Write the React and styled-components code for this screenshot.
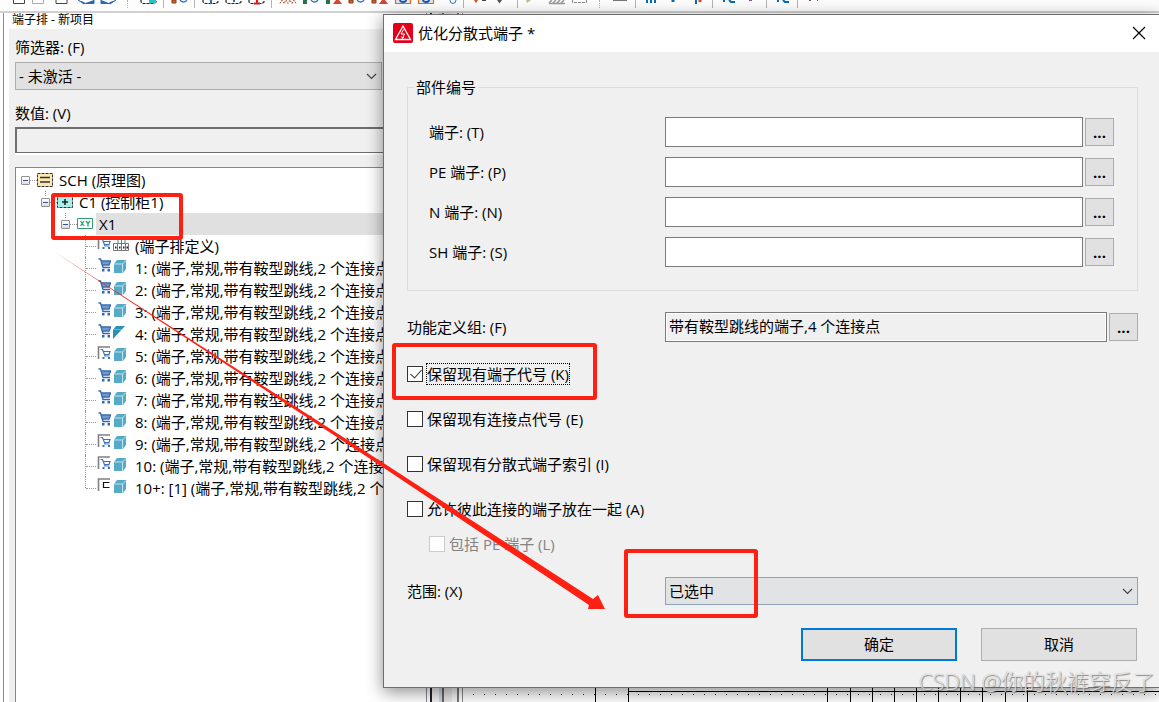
import React, { useState } from 'react';
import styled, { createGlobalStyle, css } from 'styled-components';

// Main color variables
const faceColor = '#f0f0f0';
const controlColor = '#e1e1e1';
const borderColor = '#adadad';
const fieldBorder = '#7a7a7a';
const accentColor = '#0078d7';
const markColor = '#ff2014';
const uiFont = '"Open Sans", "Noto Sans CJK SC", sans-serif';

const GlobalStyle = createGlobalStyle`
  * {
    box-sizing: border-box;
  }

  body {
    margin: 0;
    background: #fff;
    color: #000;
    font-family: ${uiFont};
    font-size: 15px;
    line-height: 22px;
    overflow: hidden;
  }

  button, input, select {
    font: inherit;
    color: inherit;
    margin: 0;
  }
`;

const Page = styled.div`
  position: relative;
  display: flex;
  flex-direction: column;
  height: 100vh;
  overflow: hidden;
`;

/* Toolbar */
const Toolbar = styled.header`
  display: flex;
  flex: none;
  height: 13px;
  padding-left: 4px;
  background: #fdfdfd;
  border-bottom: 2px solid #d0d0d0;
`;

const ToolButton = styled.button`
  flex: none;
  width: 23px;
  height: 8px;
  padding: 0;
  border: 0;
  background: transparent;

  svg {
    display: block;
  }
`;

const ToolSeparator = styled.span`
  flex: none;
  width: ${({ $wide }) => ($wide ? '18px' : '8px')};
  height: 8px;

  &::before {
    content: '';
    display: block;
    width: 1px;
    height: 8px;
    margin: 0 auto;
    border-left: 1px ${({ $wide }) => ($wide ? 'dotted' : 'solid')} #b4b4b4;
  }
`;

/* Docked navigator */
const Workspace = styled.main`
  display: flex;
  flex: 1;
  min-height: 0;
`;

const Dock = styled.section`
  display: flex;
  flex-direction: column;
  flex: none;
  width: 424px;
  margin-left: 3px;
  border-left: 1px solid #8c8c8c;
  border-right: 1px solid #828790;
`;

const DockTitle = styled.h2`
  margin: 0;
  padding-left: 8px;
  height: 16px;
  font-size: 12px;
  font-weight: 400;
  line-height: 14px;
`;

const DockBody = styled.div`
  display: flex;
  flex-direction: column;
  flex: 1;
  min-height: 0;
  margin-left: 5px;
  padding-left: 6px;
  background: ${faceColor};
`;

const DockField = styled.div`
  display: flex;
  flex-direction: column;
  gap: ${({ $gap }) => $gap}px;
  margin-top: ${({ $top }) => $top}px;
`;

const SelectBox = styled.div`
  position: relative;
  flex: ${({ $grow }) => ($grow ? 1 : 'none')};
  width: ${({ $grow }) => ($grow ? 'auto' : '367px')};
  height: 28px;

  select {
    appearance: none;
    display: block;
    width: 100%;
    height: 28px;
    padding: 0 24px 0 3px;
    border: 1px solid ${({ $grow }) => ($grow ? '#8ea3b7' : borderColor)};
    border-radius: 0;
    background: ${({ $grow }) => ($grow ? '#e1e3e5' : controlColor)};
  }

  svg {
    position: absolute;
    top: 11px;
    right: 5px;
    pointer-events: none;
  }
`;

const ValueInput = styled.input`
  flex: none;
  height: 26px;
  padding: 0 4px;
  border: 0;
  border-top: 2px solid #6e6e6e;
  border-left: 2px solid #6e6e6e;
  border-bottom: 1px solid #6e6e6e;
  border-radius: 0;
  background: ${faceColor};
  box-shadow: 0 2px 0 #fff;
`;

const Tree = styled.div`
  flex: 1;
  min-height: 0;
  margin-top: 14px;
  padding: 1px 0 0 5px;
  overflow: hidden;
  background: #fff;
  border-top: 1px solid #828790;
  border-left: 1px solid #828790;
`;

const TreeList = styled.ul`
  list-style: none;
  margin: 0;
  padding: 0 0 0 ${({ $indent = 0 }) => $indent}px;
`;

const TreeRow = styled.div`
  display: flex;
  align-items: center;
  height: 22px;
  white-space: nowrap;

  /* dotted stem that joins a nested row to its parent icon */
  ${({ $nested }) => $nested && css`
    background: repeating-linear-gradient(#999 0 1px, transparent 1px 2px) 4px 0 / 1px 6px no-repeat;
  `}

  svg {
    flex: none;
  }
`;

const Expander = styled.button`
  display: flex;
  flex: none;
  width: 9px;
  height: 9px;
  padding: 0;
  border: 1px solid #919191;
  border-radius: 1px;
  background: linear-gradient(#fff, #dcdcdc);

  &::before {
    content: '';
    width: 5px;
    height: 1px;
    margin: 3px 1px;
    background: #3a4f9c;
  }
`;

const Dash = styled.span`
  flex: none;
  width: 7px;
  border-top: 1px dotted #999;
`;

const Elbow = styled.span`
  flex: none;
  align-self: flex-start;
  width: 11px;
  height: ${({ $last }) => ($last ? '11px' : '22px')};
  border-left: 1px dotted #999;

  &::before {
    content: '';
    display: block;
    height: 11px;
    border-bottom: 1px dotted #999;
  }
`;

const NodeText = styled.span`
  flex: 1;
  padding-left: ${({ $pad = 3 }) => $pad}px;
  margin-left: 3px;
  background: ${({ $selected }) => ($selected ? '#e0e0e0' : 'transparent')};
`;

const LeafIcons = styled.span`
  display: flex;
  flex: none;
  gap: 1px;
  align-self: flex-start;
  width: 35px;
  padding: 1px 0 0 1px;
`;

/* Schematic page behind the dialog */
const Splitter = styled.div`
  flex: none;
  width: 36px;
  background: linear-gradient(
    90deg,
    #fff 0 3px, #222 3px 5px, #f0f0f0 5px 12px, #ccd2e8 12px 15px, #666 15px 17px,
    #e4e4e4 17px 25px, #f4f4f4 25px 30px, #777 30px 32px, #fff 32px 35px, #888 35px 36px
  );
`;

const Sheet = styled.div`
  display: flex;
  align-items: flex-end;
  flex: 1;
  min-width: 0;
  overflow: hidden;

  svg {
    flex: none;
  }
`;

/* Dialog */
const Dialog = styled.section`
  position: absolute;
  top: 14px;
  left: 383px;
  right: 0;
  background: ${faceColor};
  border: 1px solid #6e6e6e;
  border-right: 0;
  box-shadow: 0 4px 16px rgba(0, 0, 0, 0.45);
`;

const DialogHeader = styled.header`
  display: flex;
  align-items: center;
  height: 37px;
  padding: 0 13px 1px 9px;
  background: #fff;
`;

const DialogTitle = styled.h1`
  flex: 1;
  margin: 0 0 0 5px;
  font-size: 15px;
  font-weight: 400;
`;

const CloseButton = styled.button`
  display: flex;
  padding: 0;
  border: 0;
  background: transparent;
`;

const DialogForm = styled.form`
  padding: 24px 21px 26px 23px;
`;

const PartGroup = styled.fieldset`
  display: flex;
  flex-direction: column;
  gap: 10px;
  margin: 0;
  padding: 19px 23px 23px 21px;
  border: 1px solid #dcdcdc;

  legend {
    margin-left: -15px;
    padding: 0 2px;
  }
`;

const FieldRow = styled.div`
  display: flex;
  align-items: center;
  margin-top: ${({ $top = 0 }) => $top}px;
`;

const FieldLabel = styled.label`
  flex: none;
  width: ${({ $wide }) => ($wide ? '258px' : '236px')};
`;

const TextInput = styled.input`
  flex: 1;
  min-width: 0;
  height: 30px;
  padding: 0 3px 4px;
  border: 1px solid ${fieldBorder};
  border-radius: 0;
  background: #fff;

  ${({ readOnly }) => readOnly && css`
    background: ${faceColor};
    box-shadow: inset 0 0 0 1px #fff;
  `}
`;

const BrowseButton = styled.button`
  flex: none;
  width: 29px;
  height: 28px;
  margin-left: 2px;
  padding: 0;
  border: 1px solid ${borderColor};
  background: ${controlColor};
  font-weight: 700;
`;

const CheckList = styled.div`
  display: flex;
  flex-direction: column;
  gap: 23px;
  margin-top: 21px;
`;

const CheckLabel = styled.label`
  display: flex;
  align-items: center;
  width: fit-content;
  height: 22px;
  margin: ${({ $sub }) => ($sub ? '13px 0 0 22px' : '0')};
  color: ${({ $sub }) => ($sub ? '#838383' : '#000')};

  span {
    padding: 0 1px;
    margin-left: 3px;
    outline: ${({ $focused }) => ($focused ? '1px dotted #000' : 'none')};
    outline-offset: -1px;
  }
`;

const CheckBox = styled.input`
  appearance: none;
  flex: none;
  width: 16px;
  height: 16px;
  border: 1px solid #333;
  background: #fff;

  &:disabled {
    border-color: #ccc;
  }

  &:checked::after {
    content: '';
    display: block;
    width: 5px;
    height: 10px;
    margin: 0 0 0 5px;
    border: solid #333;
    border-width: 0 1px 1px 0;
    transform: rotate(42deg);
  }
`;

const DialogActions = styled.div`
  display: flex;
  justify-content: flex-end;
  gap: 24px;
  margin-top: 23px;
  padding-right: 1px;
`;

const ActionButton = styled.button`
  width: 156px;
  height: 33px;
  padding: 0 0 2px;
  border: ${({ $primary }) => ($primary ? `2px solid ${accentColor}` : `1px solid ${borderColor}`)};
  background: ${controlColor};
`;

/* Red marks drawn over the screen */
const Marks = styled.svg`
  position: absolute;
  top: 0;
  left: 0;
  pointer-events: none;
`;

const Watermark = styled.div`
  position: absolute;
  right: 4px;
  bottom: 5px;
  color: rgba(236, 236, 236, 0.85);
  font-size: 22px;
  font-weight: 300;
  line-height: 32px;
  text-shadow: 1px 1px 1px rgba(90, 90, 90, 0.7), 0 0 1px rgba(120, 120, 120, 0.5);
  white-space: nowrap;
`;

const page = <path d="M6 0V3.5H17V0" fill="none" stroke="#444" />;
const dashed = (
  <path d="M4 0V2L6 3.5H17L19 2V0" fill="none" stroke="#222" strokeWidth="1.2" strokeDasharray="3 1" />
);
const circle = <path d="M12 0a4 4 0 0 0 7 0" fill="none" stroke="#2f74c0" strokeWidth="1.4" />;
const orange = <path d="M4 0H8V3H4Z" fill="#d0672c" stroke="#8a3b12" />;
const green = <path d="M4 0H8V4H4Z" fill="#28734a" />;
const red = <path d="M11 4L14 0H17L20 4Z" fill="#cf4633" />;
const framed = (
  <g fill="none" strokeWidth="1.2">
    <path d="M4.5 0V3.5H19.5V0" fill="#e4e4e4" stroke="#e86a1b" />
    <path d="M9 0a3 2 0 0 0 6 0" stroke="#1556b5" strokeWidth="1.8" />
  </g>
);

// null = separator, 'wide' = toolbar break
const toolIcons = [
  ['新建', <path d="M9.5 0V3.5H20.5V0" fill="none" stroke="#444" />],
  ['打开', <path d="M5.5 0V3.5H16.5V0" fill="none" stroke="#aaa" />],
  ['页', page],
  ['后退', <path d="M5 0L11 4V2M11 3.5H21V0" fill="#2c67b2" stroke="#2c67b2" />],
  ['前进', <path d="M20 0L14 4V2M14 3.5H5V0" fill="#2c67b2" stroke="#2c67b2" />],
  'wide',
  ['设备', <g>{dashed}<path d="M12 0H19V3H12Z" fill="#21c5c9" /></g>],
  null,
  ['查找', <g>{orange}{circle}</g>],
  null,
  ['端子', <g>{dashed}<path d="M12 0V4" stroke="#2470b8" strokeWidth="2" /></g>],
  ['插头', <g>{dashed}<path d="M12 0V2" stroke="#2470b8" strokeWidth="2" /></g>],
  ['电缆', <g>{dashed}<path d="M12 0V3M9 3.5H15" stroke="#e31a1a" strokeWidth="2" /></g>],
  null,
  ['编号', <path d="M4 3.5L6 0L8 3.5L10 0L12 3.5L14 0L16 3.5L18 0L20 3.5" fill="none" stroke="#b3552c" strokeDasharray="2 1" />],
  ['连接', <g>{green}{circle}</g>],
  ['断开', <g>{green}{red}</g>],
  ['更新', <g>{orange}{circle}</g>],
  ['删除', <g>{orange}{red}</g>],
  ['视图', framed],
  ['布局', framed],
  ['放大', <path d="M13 0a3 3.5 0 0 0 6 0" fill="none" stroke="#2f74c0" />],
  null,
  ['同步', <g><path d="M6 0H10L8 3Z" fill="#d0501c" /><path d="M14 0H18V1H14Z" fill="#444" /></g>],
  ['筛选', <path d="M6 0H11L8.5 3.5Z" fill="#555" />],
  null,
  ['颜色', <path d="M4 0H9L5 3Z" fill="#b7bd8c" />],
  ['填充', <path d="M4 3L7 0M8 3L11 0M12 3L15 0M16 3L19 0M4 3.5H20" stroke="#999" strokeWidth="1.5" />],
  ['区域', <path d="M4.5 0V2.5H18.5V0" fill="none" stroke="#888" strokeDasharray="3 1" />],
  'wide',
  ['线', <path d="M4 0.5H18" stroke="#777" />],
  null,
  ['列', <path d="M7 0V3M11 0V3M15 0V3" stroke="#086bb0" strokeWidth="2" />],
  ['点', <path d="M10 0V2" stroke="#086bb0" strokeWidth="3" />],
  ['分支', <g strokeWidth="2"><path d="M10 0V4" stroke="#086bb0" /><path d="M14 0V2" stroke="#e53b3b" strokeWidth="3" /></g>],
  null,
  ['角', <path d="M7 0V2M12 0L14 2H18" fill="none" stroke="#086bb0" strokeWidth="2" />],
  ['节点', <path d="M9 0H12V1H9Z" fill="#8a51a5" />],
  null,
  ['转角', <path d="M7 0V2M12 0L14 2H18" fill="none" stroke="#086bb0" strokeWidth="2" />],
  null,
  ['文本', <path d="M7 0H9V1H7ZM15 0H16V1H15Z" fill="#864f68" />],
];

const partFields = [
  ['terminal', '端子: (T)'],
  ['pe', 'PE 端子: (P)'],
  ['n', 'N 端子: (N)'],
  ['sh', 'SH 端子: (S)'],
];

const leaves = [
  { text: '(端子排定义)', cart: 'framed', shape: 'strip' },
  { text: '1: (端子,常规,带有鞍型跳线,2 个连接点', cart: 'full' },
  { text: '2: (端子,常规,带有鞍型跳线,2 个连接点', cart: 'full' },
  { text: '3: (端子,常规,带有鞍型跳线,2 个连接点', cart: 'full' },
  { text: '4: (端子,常规,带有鞍型跳线,2 个连接点', cart: 'full', shape: 'half' },
  { text: '5: (端子,常规,带有鞍型跳线,2 个连接点', cart: 'framed' },
  { text: '6: (端子,常规,带有鞍型跳线,2 个连接点', cart: 'full' },
  { text: '7: (端子,常规,带有鞍型跳线,2 个连接点', cart: 'full' },
  { text: '8: (端子,常规,带有鞍型跳线,2 个连接点', cart: 'full' },
  { text: '9: (端子,常规,带有鞍型跳线,2 个连接点', cart: 'framed' },
  { text: '10: (端子,常规,带有鞍型跳线,2 个连接', cart: 'framed' },
  { text: '10+: [1] (端子,常规,带有鞍型跳线,2 个', cart: 'none' },
];

function Chevron() {
  return (
    <svg width="11" height="7" viewBox="0 0 11 7" fill="none" stroke="#444" strokeWidth="1.2">
      <path d="M1 1L5.5 5.5L10 1" />
    </svg>
  );
}

function CartIcon({ type }) {
  return (
    <svg width="14" height="16" viewBox="0 0 14 16" fill="none">
      {type !== 'full' && <path d="M1.500 13V1H13" stroke="#808080" strokeWidth="1.600" />}
      {type === 'full' && (
        <g>
          <path d="M4 3H13L11.500 7H5Z" fill="#8fb0dc" />
          <path d="M1.500 1H3.500L6 9.500H13M4 3H13.500L12 7H5.500" stroke="#3569ad" strokeWidth="1.400" />
          <path d="M4.500 5H12.500" stroke="#5583bf" />
          <path d="M5 11H7.500V13.500H5ZM10.500 11H13V13.500H10.500Z" fill="#3569ad" />
        </g>
      )}
      {type === 'framed' && (
        <g stroke="#3b73b8">
          <path d="M3.500 3.500H5.500L8 10H12.500M6 5.500H13L12 8.500H7.500" strokeWidth="1.200" />
          <path d="M5.500 12H7.500M11 12H13" strokeWidth="1.800" />
        </g>
      )}
      {type === 'none' && <path d="M12.500 4.500H6.500V9.500H12.500" stroke="#111" strokeWidth="1.200" />}
    </svg>
  );
}

function PartIcon({ shape }) {
  if (shape === 'strip') {
    return (
      <svg width="18" height="16" viewBox="0 0 18 16" fill="none">
        <path d="M6 8V3.500H13V8M9.500 3V8" stroke="#2f9d70" />
        <path d="M1.500 7.500H16.500V14.500H1.500ZM5.500 7V14M9.500 7V14M13.500 7V14" stroke="#777" />
        <path d="M3 11.500H4.500M7 11.500H8.500M11 11.500H12.500M14.500 11.500H16" stroke="#222" strokeWidth="2" />
      </svg>
    );
  }
  if (shape === 'half') {
    return (
      <svg width="16" height="16" viewBox="0 0 16 16">
        <path d="M1 6L4 2H13L1 15Z" fill="#2c8fb4" />
        <path d="M1 5.500H10" fill="none" stroke="#65b7d0" />
      </svg>
    );
  }
  return (
    <svg width="16" height="16" viewBox="0 0 16 16">
      <path d="M2 6L5 2H14V11L11 15H2Z" fill="#55aac8" />
      <path d="M2 6H10.500V15M10.500 6L14 2.500" fill="none" stroke="#bfe4ee" />
    </svg>
  );
}

function Navigator() {
  return (
    <Dock>
      <DockTitle>端子排 - 新项目</DockTitle>
      <DockBody>
        <DockField $top={7} $gap={4}>
          <label htmlFor="filter">筛选器: (F)</label>
          <SelectBox>
            <select id="filter">
              <option>- 未激活 -</option>
            </select>
            <Chevron />
          </SelectBox>
        </DockField>
        <DockField $top={12} $gap={3}>
          <label htmlFor="value">数值: (V)</label>
          <ValueInput id="value" type="text" />
        </DockField>
        <Tree>
          <TreeList>
            <li>
              <TreeRow>
                <Expander type="button" aria-label="折叠 SCH" />
                <Dash />
                <svg width="16" height="16" viewBox="0 0 16 16">
                  <path d="M0.5 1.5H15.5V14.5H0.5Z" fill="#fbe7b2" stroke="#333" strokeDasharray="3 1" />
                  <path d="M3 5.5H13M3 10H13" stroke="#333" strokeWidth="1.6" />
                </svg>
                <NodeText>SCH (原理图)</NodeText>
              </TreeRow>
              <TreeList $indent={20}>
                <li>
                  <TreeRow $nested>
                    <Expander type="button" aria-label="折叠 C1" />
                    <Dash />
                    <svg width="16" height="16" viewBox="0 0 16 16">
                      <path d="M0.5 2.5H15.5V13.5H0.5Z" fill="#a9f0ec" stroke="#333" strokeDasharray="3 1" />
                      <path d="M8 5V11M5 8H11" stroke="#222" strokeWidth="1.6" />
                    </svg>
                    <NodeText>C1 (控制柜1)</NodeText>
                  </TreeRow>
                  <TreeList $indent={20}>
                    <li>
                      <TreeRow $nested>
                        <Expander type="button" aria-label="折叠 X1" />
                        <Dash />
                        <svg width="16" height="16" viewBox="0 0 16 16" fill="none" stroke="#2f9d70">
                          <path d="M0.5 2.5H15.5V12.5H0.5Z" />
                          <path d="M3.500 5L7 10M7 5L3.500 10M9 5L11 7.500L13 5M11 7.500V10.500" strokeWidth="1.300" />
                        </svg>
                        <NodeText $selected>X1</NodeText>
                      </TreeRow>
                      <TreeList $indent={24}>
                        {leaves.map(({ text, cart, shape }, i) => (
                          <li key={text}>
                            <TreeRow>
                              <Elbow $last={i === leaves.length - 1} />
                              <LeafIcons>
                                <CartIcon type={cart} />
                                <PartIcon shape={shape} />
                              </LeafIcons>
                              <NodeText $pad={1}>{text}</NodeText>
                            </TreeRow>
                          </li>
                        ))}
                      </TreeList>
                    </li>
                  </TreeList>
                </li>
              </TreeList>
            </li>
          </TreeList>
        </Tree>
      </DockBody>
    </Dock>
  );
}

function Schematic() {
  const wires = [132, 165, 364, 387, 409, 431, 453, 475, 497, 519, 542, 564];
  return (
    <Sheet>
      <svg width="1400" height="16" viewBox="0 0 1400 16" shapeRendering="crispEdges">
        <path d="M10 8.5H1400" stroke="#222" strokeDasharray="1 10" />
        <path d="M165 5.5H1400" stroke="#000" />
        {wires.map((x) => (
          <path key={x} d={`M${x + 0.5} 0V16`} stroke="#000" />
        ))}
      </svg>
    </Sheet>
  );
}

function OptimizeDialog() {
  const [checks, setChecks] = useState({ k: true, e: false, i: false, a: false });
  const toggle = (id) => setChecks({ ...checks, [id]: !checks[id] });

  const options = [
    ['k', '保留现有端子代号 (K)'],
    ['e', '保留现有连接点代号 (E)'],
    ['i', '保留现有分散式端子索引 (I)'],
    ['a', '允许彼此连接的端子放在一起 (A)'],
  ];

  return (
    <Dialog role="dialog" aria-labelledby="dialog-title">
      <DialogHeader>
        <svg width="20" height="20" viewBox="0 0 20 20" fill="none">
          <rect width="20" height="20" rx="2" fill="#e2001a" />
          <path d="M10 3L17.5 16.5H2.5Z" stroke="#fff" strokeWidth="1.3" />
          <path d="M10.5 6.5L8 11H11.5L9.5 15M8.5 13.5L9.5 15.5L11 14" stroke="#fff" />
        </svg>
        <DialogTitle id="dialog-title">优化分散式端子 *</DialogTitle>
        <CloseButton type="button" aria-label="关闭">
          <svg width="14" height="14" viewBox="0 0 14 14" stroke="#000" strokeWidth="1.2">
            <path d="M1 1L13 13M13 1L1 13" />
          </svg>
        </CloseButton>
      </DialogHeader>
      <DialogForm onSubmit={(e) => e.preventDefault()}>
        <PartGroup>
          <legend>部件编号</legend>
          {partFields.map(([id, label]) => (
            <FieldRow key={id}>
              <FieldLabel htmlFor={id}>{label}</FieldLabel>
              <TextInput id={id} type="text" />
              <BrowseButton type="button">...</BrowseButton>
            </FieldRow>
          ))}
        </PartGroup>
        <FieldRow $top={21}>
          <FieldLabel htmlFor="group" $wide>功能定义组: (F)</FieldLabel>
          <TextInput id="group" type="text" readOnly value="带有鞍型跳线的端子,4 个连接点" />
          <BrowseButton type="button">...</BrowseButton>
        </FieldRow>
        <CheckList>
          {options.map(([id, label]) => (
            <CheckLabel key={id} $focused={id === 'k'}>
              <CheckBox type="checkbox" checked={checks[id]} onChange={() => toggle(id)} />
              <span>{label}</span>
            </CheckLabel>
          ))}
        </CheckList>
        <CheckLabel $sub>
          <CheckBox type="checkbox" disabled />
          <span>包括 PE 端子 (L)</span>
        </CheckLabel>
        <FieldRow $top={22}>
          <FieldLabel htmlFor="range" $wide>范围: (X)</FieldLabel>
          <SelectBox $grow>
            <select id="range">
              <option>已选中</option>
            </select>
            <Chevron />
          </SelectBox>
        </FieldRow>
        <DialogActions>
          <ActionButton type="submit" $primary>确定</ActionButton>
          <ActionButton type="button">取消</ActionButton>
        </DialogActions>
      </DialogForm>
    </Dialog>
  );
}

function App() {
  return (
    <>
      <GlobalStyle />
      <Page>
        <Toolbar>
          {toolIcons.map((item, i) =>
            Array.isArray(item) ? (
              <ToolButton key={i} type="button" aria-label={item[0]}>
                <svg width="23" height="8" viewBox="0 0 23 8">{item[1]}</svg>
              </ToolButton>
            ) : (
              <ToolSeparator key={i} $wide={item === 'wide'} />
            )
          )}
        </Toolbar>
        <Workspace>
          <Navigator />
          <Splitter />
          <Schematic />
        </Workspace>
        <OptimizeDialog />
        <Marks width="780" height="640" viewBox="0 0 780 640">
          <g fill="none" stroke={markColor} strokeWidth="4" strokeLinejoin="round">
            <rect x="53" y="195" width="128" height="43" rx="1" />
            <rect x="394" y="345" width="201" height="53" rx="1" />
            <rect x="626" y="551" width="130" height="65" rx="1" />
          </g>
          <path d="M53 251L385 464L593 599L598 595L605 609L588 609L589 605L384 468Z" fill={markColor} />
        </Marks>
        <Watermark>CSDN @你的秋裤穿反了</Watermark>
      </Page>
    </>
  );
}

export default App;
